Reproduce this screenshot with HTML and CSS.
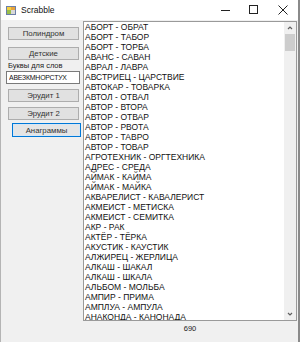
FILE: index.html
```html
<!DOCTYPE html>
<html lang="ru">
<head>
  <meta charset="UTF-8">
  <title>Scrabble</title>
  <link rel="stylesheet" href="styles.css">
</head>
<body>
  <div class="window">
    <header class="titlebar">
      <svg class="app-icon" width="10" height="9" viewBox="0 0 10 9">
        <rect x="0" y="0" width="10" height="9" fill="#6b7fa8"/>
        <rect x="1" y="1" width="4" height="3" fill="#f4d03f"/>
        <rect x="5" y="1" width="4" height="3" fill="#e8a33c"/>
        <rect x="1" y="4" width="4" height="4" fill="#9bbf4a"/>
        <rect x="5" y="4" width="4" height="4" fill="#d9d9d9"/>
      </svg>
      <span class="title">Scrabble</span>
      <div class="controls">
        <svg class="ctl" width="28" height="20" viewBox="0 0 28 20"><line x1="9" y1="10.5" x2="18" y2="10.5" stroke="#222" stroke-width="1"/></svg>
        <svg class="ctl" width="28" height="20" viewBox="0 0 28 20"><rect x="9.5" y="5.5" width="8" height="8" fill="none" stroke="#222" stroke-width="1"/></svg>
        <svg class="ctl" width="30" height="20" viewBox="0 0 30 20"><path d="M10.5 5.5 L19.5 14.5 M19.5 5.5 L10.5 14.5" stroke="#222" stroke-width="1"/></svg>
      </div>
    </header>

    <div class="client">
      <aside class="side">
        <button class="btn btn-first" type="button">Полиндром</button>
        <button class="btn" type="button">Детские</button>
        <label class="caption" for="letters">Буквы для слов</label>
        <input class="textbox" id="letters" type="text" value="АВЕЗКМНОРСТУХ">
        <button class="btn btn-gap" type="button">Эрудит 1</button>
        <button class="btn btn-gap" type="button">Эрудит 2</button>
        <button class="btn btn-focus" type="button">Анаграммы</button>
      </aside>

      <main class="main">
        <div class="listbox">
          <ul class="items" id="items"></ul>
          <div class="scrollbar">
            <svg class="arrow" width="12" height="12" viewBox="0 0 12 12"><path d="M4 7 L6 5 L8 7" fill="none" stroke="#606060" stroke-width="1.2"/></svg>
            <div class="track"><div class="thumb"></div></div>
            <svg class="arrow" width="12" height="12" viewBox="0 0 12 12"><path d="M4 5 L6 7 L8 5" fill="none" stroke="#606060" stroke-width="1.2"/></svg>
          </div>
        </div>
        <div class="count">690</div>
      </main>
    </div>
  </div>

  <script>
    const pairs = [
      "АБОРТ - ОБРАТ", "АБОРТ - ТАБОР", "АБОРТ - ТОРБА", "АВАНС - САВАН",
      "АВРАЛ - ЛАВРА", "АВСТРИЕЦ - ЦАРСТВИЕ", "АВТОКАР - ТОВАРКА", "АВТОЛ - ОТВАЛ",
      "АВТОР - ВТОРА", "АВТОР - ОТВАР", "АВТОР - РВОТА", "АВТОР - ТАВРО",
      "АВТОР - ТОВАР", "АГРОТЕХНИК - ОРГТЕХНИКА", "АДРЕС - СРЕДА", "АЙМАК - КАЙМА",
      "АЙМАК - МАЙКА", "АКВАРЕЛИСТ - КАВАЛЕРИСТ", "АКМЕИСТ - МЕТИСКА", "АКМЕИСТ - СЕМИТКА",
      "АКР - РАК", "АКТЁР - ТЁРКА", "АКУСТИК - КАУСТИК", "АЛЖИРЕЦ - ЖЕРЛИЦА",
      "АЛКАШ - ШАКАЛ", "АЛКАШ - ШКАЛА", "АЛЬБОМ - МОЛЬБА", "АМПИР - ПРИМА",
      "АМПЛУА - АМПУЛА", "АНАКОНДА - КАНОНАДА"
    ];

    const list = document.getElementById("items");
    pairs.forEach((text) => {
      const li = document.createElement("li");
      li.textContent = text;
      list.appendChild(li);
    });
  </script>
</body>
</html>
```

FILE: styles.css
```css
body {
  margin: 0;
  font-family: 'Liberation Sans', Arial, sans-serif;
  background: #fff;
}

.window {
  width: 300px;
  height: 342px;
  display: flex;
  flex-direction: column;
  background: #f0f0f0;
  border-left: 1px solid #b4b4b4;
  border-right: 2px solid #8a8a8a;
  box-sizing: border-box;
  overflow: hidden;
}

.titlebar {
  height: 20px;
  flex: none;
  display: flex;
  align-items: center;
  background: #fff;
}

.app-icon {
  margin-left: 5px;
}

.title {
  margin-left: 5px;
  font-size: 8.5px;
  color: #111;
}

.controls {
  margin-left: auto;
  display: flex;
}

.client {
  flex: 1;
  display: flex;
  padding-top: 1px;
}

.side {
  width: 82px;
  flex: none;
  display: flex;
  flex-direction: column;
  padding-left: 7px;
  box-sizing: border-box;
}

.btn {
  width: 71px;
  height: 13px;
  margin: 0;
  padding: 0;
  font-family: inherit;
  font-size: 7.8px;
  color: #333;
  background: #e1e1e1;
  border: 1px solid #adadad;
}

.btn-first {
  margin-top: 6px;
  margin-bottom: 7px;
}

.btn-gap {
  margin-top: 5px;
}

.btn-focus {
  width: 69px;
  height: 14px;
  margin-left: 4px;
  margin-top: 3px;
  border-color: #0078d7;
  box-shadow: inset 0 0 0 1px #d6e7f6;
  background: #e5e5e5;
}

.caption {
  height: 9px;
  line-height: 9px;
  margin: 1px 0 1px 0;
  font-size: 7.5px;
  color: #222;
}

.textbox {
  width: 74px;
  height: 13px;
  margin-left: -2px;
  padding: 0 2px;
  box-sizing: border-box;
  font-family: inherit;
  font-size: 6.9px;
  letter-spacing: -0.2px;
  color: #111;
  background: #fff;
  border: 1px solid #7a7a7a;
}

.main {
  flex: 1;
  display: flex;
  flex-direction: column;
  padding-right: 1px;
}

.listbox {
  height: 300px;
  display: flex;
  background: #fff;
  border: 1px solid #9a9a9a;
  box-sizing: border-box;
}

.items {
  flex: 1;
  margin: 0;
  padding: 0 0 0 1px;
  list-style: none;
  overflow: hidden;
}

.items li {
  height: 10px;
  line-height: 10px;
  font-size: 8.5px;
  color: #111;
  white-space: nowrap;
}

.scrollbar {
  width: 12px;
  display: flex;
  flex-direction: column;
  background: #f0f0f0;
}

.arrow {
  flex: none;
}

.track {
  flex: 1;
  padding: 0 1px;
}

.thumb {
  height: 17px;
  background: #cdcdcd;
}

.count {
  text-align: center;
  font-size: 7.5px;
  color: #222;
  padding-top: 3px;
}
```
